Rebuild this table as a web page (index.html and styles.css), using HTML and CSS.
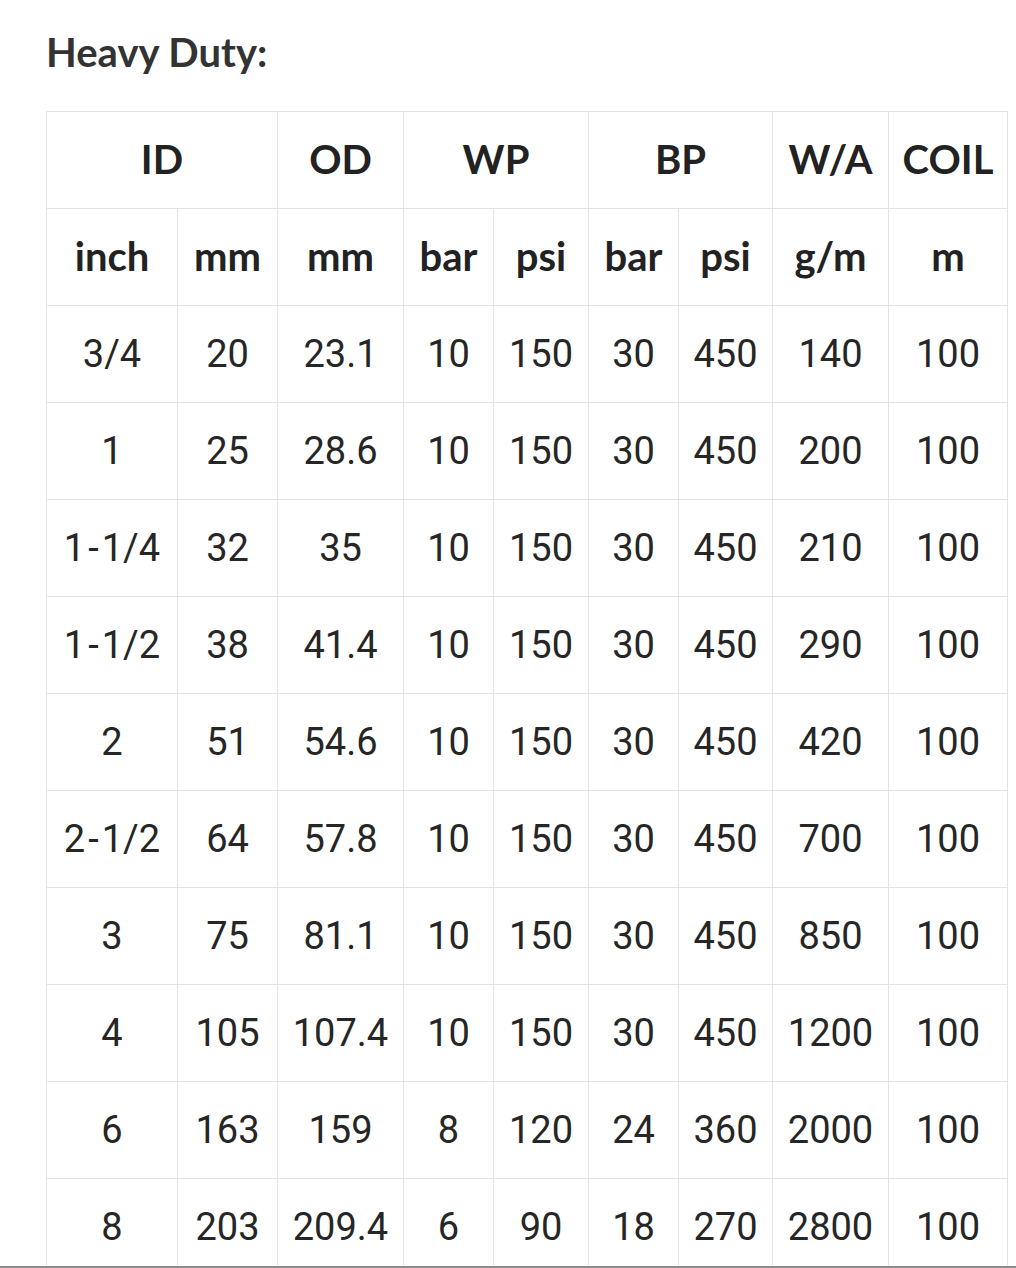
FILE: index.html
```html
<!DOCTYPE html>
<html>
<head>
<meta charset="utf-8">
<link rel="stylesheet" href="styles.css">
</head>
<body>
<div class="page">
  <h2 class="title">Heavy Duty:</h2>
  <table class="spec">
    <colgroup>
      <col class="c1"><col class="c2"><col class="c3"><col class="c4"><col class="c5"><col class="c6"><col class="c7"><col class="c8"><col class="c9">
    </colgroup>
    <thead>
      <tr><th colspan="2">ID</th><th>OD</th><th colspan="2">WP</th><th colspan="2">BP</th><th>W/A</th><th>COIL</th></tr>
      <tr><th>inch</th><th>mm</th><th>mm</th><th>bar</th><th>psi</th><th>bar</th><th>psi</th><th>g/m</th><th>m</th></tr>
    </thead>
    <tbody>
      <tr><td>3/4</td><td>20</td><td>23.1</td><td>10</td><td>150</td><td>30</td><td>450</td><td>140</td><td>100</td></tr>
      <tr><td>1</td><td>25</td><td>28.6</td><td>10</td><td>150</td><td>30</td><td>450</td><td>200</td><td>100</td></tr>
      <tr><td>1<span class="dash">-</span>1/4</td><td>32</td><td>35</td><td>10</td><td>150</td><td>30</td><td>450</td><td>210</td><td>100</td></tr>
      <tr><td>1<span class="dash">-</span>1/2</td><td>38</td><td>41.4</td><td>10</td><td>150</td><td>30</td><td>450</td><td>290</td><td>100</td></tr>
      <tr><td>2</td><td>51</td><td>54.6</td><td>10</td><td>150</td><td>30</td><td>450</td><td>420</td><td>100</td></tr>
      <tr><td>2<span class="dash">-</span>1/2</td><td>64</td><td>57.8</td><td>10</td><td>150</td><td>30</td><td>450</td><td>700</td><td>100</td></tr>
      <tr><td>3</td><td>75</td><td>81.1</td><td>10</td><td>150</td><td>30</td><td>450</td><td>850</td><td>100</td></tr>
      <tr><td>4</td><td>105</td><td>107.4</td><td>10</td><td>150</td><td>30</td><td>450</td><td>1200</td><td>100</td></tr>
      <tr><td>6</td><td>163</td><td>159</td><td>8</td><td>120</td><td>24</td><td>360</td><td>2000</td><td>100</td></tr>
      <tr><td>8</td><td>203</td><td>209.4</td><td>6</td><td>90</td><td>18</td><td>270</td><td>2800</td><td>100</td></tr>
    </tbody>
  </table>
</div>
<div class="bottom-edge"></div>
</body>
</html>
```

FILE: styles.css
```css
html, body {
  margin: 0;
  padding: 0;
  background: #ffffff;
}

.page {
  padding: 26px 0 0 46px;
}

.title {
  margin: 0 0 33px 0;
  font-family: Lato, "Open Sans", sans-serif;
  font-weight: 700;
  font-size: 40px;
  line-height: 52px;
  color: #333333;
}

.spec {
  border-collapse: collapse;
  table-layout: fixed;
  width: 961px;
}

.c1 { width: 131px; }
.c2 { width: 100px; }
.c3 { width: 126px; }
.c4 { width: 90px; }
.c5 { width: 95px; }
.c6 { width: 90px; }
.c7 { width: 94px; }
.c8 { width: 116px; }
.c9 { width: 119px; }

.spec th,
.spec td {
  border: 1px solid #e4e4e4;
  height: 96px;
  padding: 0;
  text-align: center;
  vertical-align: middle;
  color: #222222;
  white-space: nowrap;
  line-height: 44px;
}

.spec th {
  font-family: Lato, "Open Sans", sans-serif;
  font-weight: 700;
  font-size: 40px;
  height: 93px;
  padding-bottom: 3px;
}

.spec td {
  font-family: Roboto, "Noto Sans", sans-serif;
  font-weight: 400;
  font-size: 38px;
  color: #262626;
}

.dash {
  margin: 0 3px;
}

.bottom-edge {
  position: fixed;
  left: 0;
  right: 0;
  bottom: 0;
  height: 2px;
  background: #8c8c8c;
}
```
